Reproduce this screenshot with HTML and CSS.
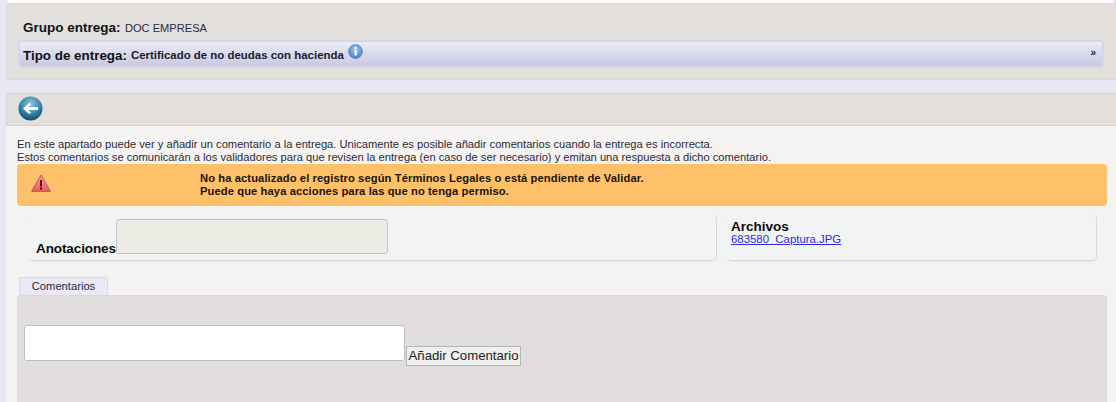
FILE: index.html
```html
<!DOCTYPE html>
<html lang="es">
<head>
<meta charset="utf-8">
<title>Entrega</title>
<link rel="stylesheet" href="styles.css">
</head>
<body>
<div class="top-strip"></div>
<section class="panel head-panel">
  <div class="group-row"><span class="group-label">Grupo entrega:</span> <span class="group-value">DOC EMPRESA</span></div>
  <div class="type-bar">
    <div class="type-text">
      <span class="type-label">Tipo de entrega:</span>
      <span class="type-value">Certificado de no deudas con hacienda</span>
      <svg class="info-icon" width="15" height="15" viewBox="0 0 16 16">
        <defs><radialGradient id="ib" cx="50%" cy="35%" r="65%"><stop offset="0" stop-color="#a9c8ea"/><stop offset="1" stop-color="#3f7fc0"/></radialGradient></defs>
        <circle cx="8" cy="8" r="7.4" fill="url(#ib)" stroke="#4f86bd" stroke-width=".8"/>
        <rect x="7" y="3" width="2.2" height="2.2" fill="#fff"/>
        <rect x="7" y="6.2" width="2.2" height="6" fill="#fff"/>
      </svg>
    </div>
    <span class="chevrons">»</span>
  </div>
</section>
<section class="panel nav-panel">
  <svg class="back-icon" width="25" height="25" viewBox="0 0 25 25">
    <defs><radialGradient id="bb" cx="50%" cy="30%" r="75%"><stop offset="0" stop-color="#8fc3dc"/><stop offset=".6" stop-color="#2f7fa6"/><stop offset="1" stop-color="#123f58"/></radialGradient></defs>
    <circle cx="12.5" cy="12.5" r="12" fill="url(#bb)"/>
    <path d="M5 12.5 L11.5 6.8 L13.2 8.5 L10 11 H20 V14 H10 L13.2 16.5 L11.5 18.2 Z" fill="#fff"/>
  </svg>
</section>
<main class="content">
  <p class="intro">En este apartado puede ver y añadir un comentario a la entrega. Unicamente es posible añadir comentarios cuando la entrega es incorrecta.<br>Estos comentarios se comunicarán a los validadores para que revisen la entrega (en caso de ser necesario) y emitan una respuesta a dicho comentario.</p>
  <div class="warning">
    <svg class="warn-icon" width="20" height="19" viewBox="0 0 20 19">
      <defs><linearGradient id="wg" x1="0" y1="0" x2="0" y2="1"><stop offset="0" stop-color="#f6a5a5"/><stop offset="1" stop-color="#e25a5a"/></linearGradient></defs>
      <path d="M10 1 L19.4 17.4 H.6 Z" fill="url(#wg)" stroke="#c95050" stroke-width="1" stroke-linejoin="round"/>
      <rect x="9" y="6" width="2" height="6.5" fill="#5a1010"/>
      <rect x="9" y="13.5" width="2" height="2" fill="#5a1010"/>
    </svg>
    <div class="warn-text">No ha actualizado el registro según Términos Legales o está pendiente de Validar.<br>Puede que haya acciones para las que no tenga permiso.</div>
  </div>
  <div class="info-area">
    <div class="box notes-box">
      <span class="box-title">Anotaciones</span><div class="notes-field"></div>
    </div>
    <div class="box files-box">
      <div class="box-title">Archivos</div>
      <a class="file-link" href="#">683580_Captura.JPG</a>
    </div>
  </div>
  <div class="tabs"><span class="tab">Comentarios</span></div>
  <div class="tab-panel">
    <textarea class="comment-input"></textarea><button class="add-btn" type="button">Añadir Comentario</button>
  </div>
</main>
</body>
</html>
```

FILE: styles.css
```css
html, body { margin: 0; padding: 0; }
body {
  width: 1116px;
  height: 402px;
  overflow: hidden;
  background: #e8e7f5;
  font-family: "Liberation Sans", Arial, sans-serif;
  color: #111;
}
.top-strip {
  height: 3px;
  margin: 0 3px 0 8px;
  background: #fff;
}
.panel {
  margin-left: 6px;
  background: #e2dfdc;
  border: 1px solid #d9d7e6;
  border-right: 0;
  box-sizing: border-box;
  border-radius: 3px 0 0 3px;
}
.head-panel {
  height: 77px;
  padding: 14px 12px 0 11px;
}
.group-row {
  height: 22px;
  line-height: 18px;
  padding-left: 5px;
}
.group-label { font-size: 13.5px; font-weight: 700; color: #111; }
.group-value { font-size: 11.1px; color: #2a2a3c; }
.type-bar {
  height: 28px;
  box-sizing: border-box;
  border: 2px solid #d6d5ea;
  border-radius: 4px;
  background: linear-gradient(#ecebf6, #c8c8e2);
  display: flex;
  align-items: center;
  justify-content: space-between;
  padding: 2px 6px 0 3px;
}
.type-text { display: flex; align-items: center; }
.type-label { font-size: 13.4px; font-weight: 700; }
.type-value { font-size: 11.45px; font-weight: 700; margin-left: 4px; color: #1c1c2c; }
.info-icon { margin: -7px 0 0 4px; }
.chevrons { font-size: 10px; font-weight: 700; line-height: 1; margin-top: -5px; color: #223; }
.nav-panel {
  margin-top: 13px;
  height: 33px;
  padding: 2px 0 0 11px;
  border-color: #d6d3d2;
}
.back-icon { display: block; }
.content {
  margin-left: 6px;
  height: 276px;
  background: #f5f3f2;
  padding: 12px 0 0 11px;
  box-sizing: border-box;
  overflow: hidden;
}
.intro {
  margin: 0;
  font-size: 11.17px;
  line-height: 13px;
  color: #2a2a35;
}
.warning {
  margin: 0 9px 0 0;
  height: 42px;
  background: #fec069;
  border-radius: 4px;
  display: flex;
  align-items: flex-start;
  box-sizing: border-box;
  padding: 8px 0 0 14px;
}
.warn-icon { flex: none; margin-top: 2px; }
.warn-text {
  margin-left: 149px;
  font-size: 11.2px;
  font-weight: 700;
  line-height: 13px;
  letter-spacing: .09px;
  color: #1b1408;
}
.info-area {
  margin-right: 9px;
  height: 71px;
  background: #f1f4f3;
  display: flex;
  gap: 10px;
  padding: 8px 10px 0 10px;
  box-sizing: border-box;
}
.box {
  height: 47px;
  box-sizing: border-box;
  border: 1px solid #d5d8e4;
  border-top-color: transparent;
  border-left-color: transparent;
  border-radius: 5px;
  box-shadow: 0 1px 0 #e4e5ee;
}
.notes-box {
  width: 690px;
  display: flex;
  align-items: flex-end;
  padding-left: 8px;
  padding-bottom: 6px;
}
.files-box {
  flex: 1;
  padding: 5px 0 0 3px;
}
.box-title { font-size: 13.5px; font-weight: 700; line-height: 14px; color: #0c0c0c; }
.notes-box .box-title { line-height: 13px; margin-bottom: -1px; letter-spacing: -.1px; }
.notes-field {
  width: 272px;
  height: 35px;
  box-sizing: border-box;
  background: #ecebe4;
  border: 1px solid #c4c4c2;
  border-radius: 3px;
}
.file-link { font-size: 11.4px; line-height: 13px; display: block; margin-top: -1px; color: #2b2bdc; }
.tabs {
  height: 18px;
  margin-right: 9px;
  display: flex;
  padding-left: 2px;
}
.tab {
  height: 18px;
  width: 89px;
  text-align: center;
  box-sizing: border-box;
  background: #e9e8f5;
  border: 1px solid #d9d7ea;
  border-bottom: 0;
  border-radius: 3px 3px 0 0;
  font-size: 11.2px;
  line-height: 17px;
  color: #2a2a35;
}
.tab-panel {
  height: 130px;
  margin-right: 9px;
  background: #e1dedd;
  border: 1px solid #dad6e4;
  border-radius: 4px 4px 0 0;
  box-sizing: border-box;
  padding-top: 29px;
  padding-left: 6px;
}
.comment-input {
  display: inline-block;
  width: 381px;
  height: 36px;
  box-sizing: border-box;
  background: #fff;
  border: 1px solid #bdbdbd;
  border-radius: 3px;
  margin: 0 0 5px;
  padding: 0;
  resize: none;
  vertical-align: bottom;
  outline: none;
}
.add-btn {
  display: inline-block;
  box-sizing: border-box;
  width: 115px;
  height: 20px;
  margin: 0 0 0 1px;
  padding: 0;
  background: #efefef;
  border: 1px solid #b5b5b5;
  font-family: "Liberation Sans", Arial, sans-serif;
  font-size: 13.2px;
  line-height: 18px;
  color: #222;
  vertical-align: bottom;
}
```
